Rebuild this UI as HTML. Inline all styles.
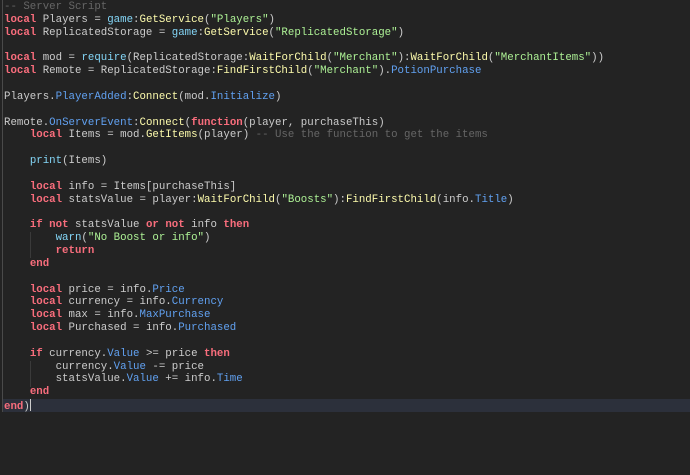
<!DOCTYPE html>
<html><head><style>
html,body{margin:0;padding:0;background:#232323;width:690px;height:475px;overflow:hidden}
.ed{position:absolute;left:0;top:0;width:690px;height:475px;background:#232323}
.gut{position:absolute;left:2px;top:0;width:1px;height:412px;background:#4a4a4a}
.cur{position:absolute;left:3px;top:399px;width:687px;height:13px;background:#2c303b}
.guide{position:absolute;width:1px;background:#3a3a3a}
pre{position:absolute;left:4px;top:1px;margin:0;font-family:"Liberation Mono",monospace;font-size:10.75px;line-height:12.84px;color:#cccccc;white-space:pre}
.k{color:#f86d7c;font-weight:bold}.s{color:#adf195}.f{color:#fdfbac}.p{color:#61a1f1}.b{color:#84d6f7}.c{color:#666666}
.caret{display:inline-block;width:1px;height:12px;background:#ccc;vertical-align:-2px}
</style></head><body><div class="ed">
<div class="gut"></div>
<div class="cur"></div>
<div class="guide" style="left:30px;top:232px;height:26px"></div>
<div class="guide" style="left:30px;top:361px;height:26px"></div>
<pre><span class="c">-- Server Script</span>
<span class="k">local</span> Players = <span class="b">game</span>:<span class="f">GetService</span>(<span class="s">"Players"</span>)
<span class="k">local</span> ReplicatedStorage = <span class="b">game</span>:<span class="f">GetService</span>(<span class="s">"ReplicatedStorage"</span>)

<span class="k">local</span> mod = <span class="b">require</span>(ReplicatedStorage:<span class="f">WaitForChild</span>(<span class="s">"Merchant"</span>):<span class="f">WaitForChild</span>(<span class="s">"MerchantItems"</span>))
<span class="k">local</span> Remote = ReplicatedStorage:<span class="f">FindFirstChild</span>(<span class="s">"Merchant"</span>).<span class="p">PotionPurchase</span>

Players.<span class="p">PlayerAdded</span>:<span class="f">Connect</span>(mod.<span class="p">Initialize</span>)

Remote.<span class="p">OnServerEvent</span>:<span class="f">Connect</span>(<span class="k">function</span>(player, purchaseThis)
    <span class="k">local</span> Items = mod.<span class="f">GetItems</span>(player) <span class="c">-- Use the function to get the items</span>

    <span class="b">print</span>(Items)

    <span class="k">local</span> info = Items[purchaseThis]
    <span class="k">local</span> statsValue = player:<span class="f">WaitForChild</span>(<span class="s">"Boosts"</span>):<span class="f">FindFirstChild</span>(info.<span class="p">Title</span>)

    <span class="k">if</span> <span class="k">not</span> statsValue <span class="k">or</span> <span class="k">not</span> info <span class="k">then</span>
        <span class="b">warn</span>(<span class="s">"No Boost or info"</span>)
        <span class="k">return</span>
    <span class="k">end</span>

    <span class="k">local</span> price = info.<span class="p">Price</span>
    <span class="k">local</span> currency = info.<span class="p">Currency</span>
    <span class="k">local</span> max = info.<span class="p">MaxPurchase</span>
    <span class="k">local</span> Purchased = info.<span class="p">Purchased</span>

    <span class="k">if</span> currency.<span class="p">Value</span> &gt;= price <span class="k">then</span>
        currency.<span class="p">Value</span> -= price
        statsValue.<span class="p">Value</span> += info.<span class="p">Time</span>
    <span class="k">end</span>
<span class="k">end</span>)<span class="caret"></span></pre>
</div></body></html>
